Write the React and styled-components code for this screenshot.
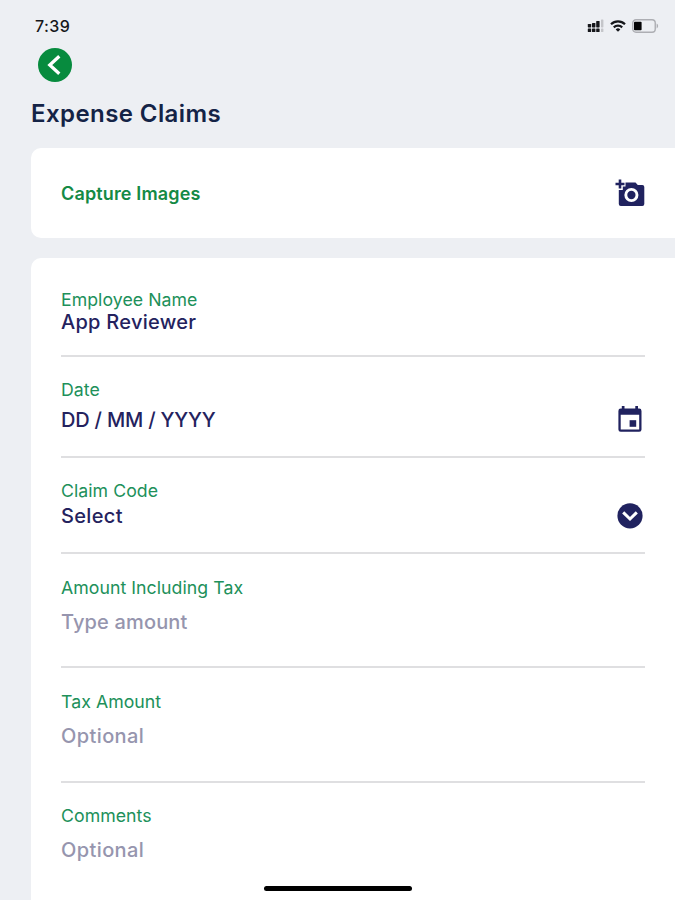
// Imports
import React from 'react';
import styled, { createGlobalStyle } from 'styled-components';

// Fields
const fields = [
	{ id: 1, label: 'Employee Name', value: 'App Reviewer', top: 23, gap: -1, height: 91, spacing: 0.27 },
	{ id: 2, label: 'Date', value: 'DD / MM / YYYY', top: 22, gap: 7, height: 101, spacing: -0.2, icon: 'calendar' },
	{ id: 3, label: 'Claim Code', value: 'Select', top: 22, gap: 2, height: 96, spacing: 0.35, icon: 'chevron' },
	{ id: 4, label: 'Amount Including Tax', placeholder: 'Type amount', top: 23, gap: 11, height: 114, spacing: 0.15 },
	{ id: 5, label: 'Tax Amount', placeholder: 'Optional', top: 23, gap: 11, height: 115, spacing: 0.4 },
	{ id: 6, label: 'Comments', placeholder: 'Optional', top: 22, gap: 11, height: 117, spacing: 0.4 },
];

// Icons
const SignalIcon = () => (
	<svg width="17" height="14" viewBox="0 0 17 14" fill="#15161a">
		<rect x="0.8" y="5" width="3.4" height="3.4" rx="0.6"/>
		<rect x="5" y="4" width="3.4" height="4.4" rx="0.6"/>
		<rect x="9.2" y="2" width="3.4" height="6.4" rx="0.6"/>
		<rect x="14" y="0.5" width="2.4" height="7.9" rx="0.6" fill="#c4c5c9"/>
		<rect x="0.8" y="9.5" width="3.4" height="3.5" rx="0.6"/>
		<rect x="5" y="9.5" width="3.4" height="3.5" rx="0.6"/>
		<rect x="9.2" y="9.5" width="3.4" height="3.5" rx="0.6"/>
		<rect x="14" y="9.5" width="2.4" height="3.5" rx="0.6" fill="#c4c5c9"/>
	</svg>
);

const WifiIcon = () => (
	<svg width="16" height="12" viewBox="0 0 16 12" fill="none" stroke="#15161a" strokeWidth="2.2">
		<path d="M1 4.3a10 10 0 0 1 14 0"/>
		<path d="M3.8 7.4a6 6 0 0 1 8.4 0"/>
		<path d="M8 11.8 5.7 9.5a3.2 3.2 0 0 1 4.6 0z" fill="#15161a" stroke="none"/>
	</svg>
);

const BatteryIcon = () => (
	<svg width="27" height="14" viewBox="0 0 27 14">
		<rect x="0.75" y="0.75" width="22.5" height="12.5" rx="3.2" fill="none" stroke="#adaeb3" strokeWidth="1.4"/>
		<rect x="2" y="2.7" width="7.6" height="8.6" rx="0.8" fill="#050506"/>
		<path d="M24.6 4.6c2 .7 2 4.1 0 4.8z" fill="#adaeb3"/>
	</svg>
);

const CameraIcon = () => (
	<svg width="30" height="28" viewBox="0 0 30 28">
		<path d="M10.5 3.500h10l2.300 2.500h4.500a2 2 0 0 1 2 2v17a2 2 0 0 1-2 2H5.800a2 2 0 0 1-2-2V11h4V7.500h2.700z" fill="#20225f"/>
		<circle cx="16.400" cy="16" r="5.600" fill="none" stroke="#fff" strokeWidth="2.900"/>
		<path d="M5 .5v9M.5 5h9" fill="none" stroke="#20225f" strokeWidth="2.600"/>
	</svg>
);

const CalendarIcon = () => (
	<svg width="26" height="28" viewBox="0 0 26 28" fill="#20225f">
		<path fillRule="evenodd" d="M4.800 0h2.700v2.600h10.800V0H21v2.600h1.200a2.300 2.300 0 0 1 2.300 2.300v18.600a2.300 2.300 0 0 1-2.300 2.300H3.700a2.300 2.300 0 0 1-2.300-2.300V4.900a2.300 2.300 0 0 1 2.300-2.300h1.100zM3.700 8.700v14.900h18.500V8.700z"/>
		<rect x="12.600" y="14.200" width="6.600" height="6.600"/>
	</svg>
);

const ChevronIcon = () => (
	<svg width="26" height="26" viewBox="0 0 26 26">
		<circle cx="13" cy="12.800" r="12.600" fill="#20225f"/>
		<path d="m6.200 9.400 6.800 6.600 6.800-6.600" fill="none" stroke="#fff" strokeWidth="3"/>
	</svg>
);

const BackIcon = () => (
	<svg width="34" height="34" viewBox="0 0 34 34">
		<path d="m21.300 8.300-9.500 8.700 9.500 8.700" fill="none" stroke="#fff" strokeWidth="3.300"/>
	</svg>
);

const icons = {
	calendar: <CalendarIcon/>,
	chevron: <ChevronIcon/>,
};

// Component
const App = () => {

	// Return
	return(
		<>
			<GlobalStyle/>
			<Screen>
				<StatusBar>
					<Time>7:39</Time>
					<StatusIcons>
						<SignalIcon/>
						<WifiIcon/>
						<BatteryIcon/>
					</StatusIcons>
				</StatusBar>
				<BackButton type="button" aria-label="Back">
					<BackIcon/>
				</BackButton>
				<Title>Expense Claims</Title>
				<CaptureCard>
					<CaptureLabel>Capture Images</CaptureLabel>
					<CameraIcon/>
				</CaptureCard>
				<FormCard>
					{
						fields.map((field) => {
							const { id, label, value, placeholder, top, gap, height, spacing, icon } = field;
							return(
								<Field key={ id } $height={ height } $top={ top }>
									<Label>{ label }</Label>
									<ValueRow $gap={ gap }>
										<Value $muted={ !value } $spacing={ spacing }>{ value || placeholder }</Value>
										{ icon && icons[icon] }
									</ValueRow>
								</Field>
							);
						})
					}
				</FormCard>
				<HomeIndicator/>
			</Screen>
		</>
	);

};

// Styled
const GlobalStyle = createGlobalStyle`
	* {
		box-sizing: border-box;
	}
	body {
		margin: 0;
		background: #edeff3;
		font-family: Inter, "Liberation Sans", sans-serif;
	}
	svg {
		display: block;
		flex-shrink: 0;
	}
`;

const Screen = styled.div`
	position: relative;
	display: flex;
	flex-direction: column;
	height: 900px;
	padding-left: 31px;
	overflow: hidden;
	background: #edeff3;
`;

const StatusBar = styled.div`
	display: flex;
	align-items: center;
	justify-content: space-between;
	height: 48px;
	padding: 3px 16px 0 4px;
`;

const Time = styled.span`
	color: #15161a;
	font-size: 16px;
	font-weight: 500;
	letter-spacing: 0.4px;
`;

const StatusIcons = styled.div`
	display: flex;
	align-items: center;
	gap: 6px;
`;

const BackButton = styled.button`
	width: 34px;
	height: 34px;
	flex-shrink: 0;
	margin-left: 7px;
	padding: 0;
	border: none;
	border-radius: 50%;
	background: #078b3e;
	cursor: pointer;
`;

const Title = styled.h1`
	flex-shrink: 0;
	height: 30px;
	margin: 17px 0 19px;
	color: #142346;
	font-size: 24px;
	font-weight: 600;
	line-height: 30px;
	letter-spacing: 0.42px;
`;

const Card = styled.section`
	flex-shrink: 0;
	background: #fff;
	border-radius: 10px 0 0 10px;
	padding: 0 30px;
`;

const CaptureCard = styled(Card)`
	display: flex;
	align-items: center;
	justify-content: space-between;
	height: 90px;
`;

const CaptureLabel = styled.span`
	color: #148a45;
	font-size: 18px;
	font-weight: 600;
	letter-spacing: 0.15px;
`;

const FormCard = styled(Card)`
	margin-top: 20px;
	padding-top: 8px;
	border-radius: 10px 0 0 0;
`;

const Field = styled.div`
	height: ${ (props) => props.$height }px;
	padding-top: ${ (props) => props.$top }px;
	border-bottom: 2px solid #dfdfe1;
	&:last-child {
		border-bottom: none;
	}
`;

const Label = styled.div`
	color: #20905a;
	font-size: 17.7px;
	font-weight: 400;
	line-height: 22px;
	letter-spacing: 0.05px;
`;

const ValueRow = styled.div`
	display: flex;
	align-items: center;
	justify-content: space-between;
	height: 24px;
	margin-top: ${ (props) => props.$gap }px;
	svg {
		margin-right: 2px;
	}
`;

const Value = styled.span`
	color: ${ (props) => props.$muted ? '#9695ae' : '#24225e' };
	font-size: 20px;
	font-weight: 500;
	line-height: 24px;
	letter-spacing: ${ (props) => props.$spacing }px;
`;

const HomeIndicator = styled.div`
	position: absolute;
	left: 264px;
	bottom: 9px;
	width: 148px;
	height: 5px;
	border-radius: 3px;
	background: #000;
`;

// Export
export default App;
